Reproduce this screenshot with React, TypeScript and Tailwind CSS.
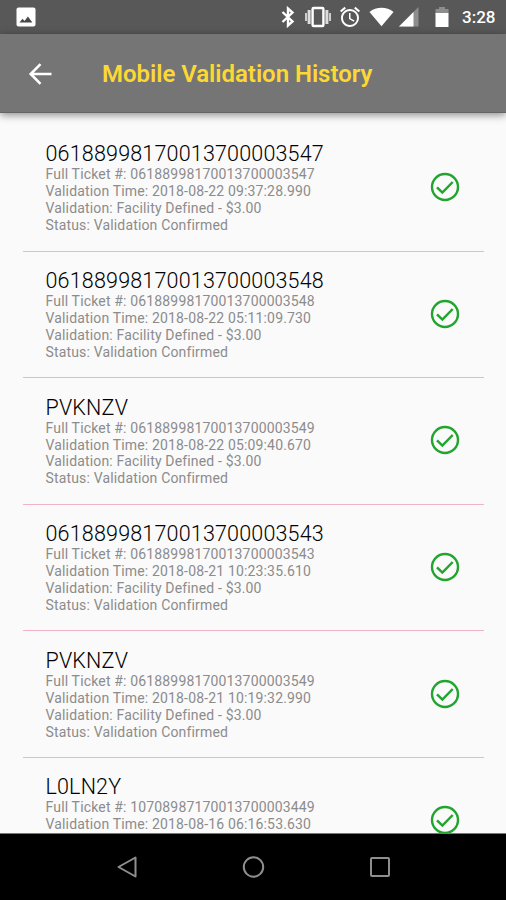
import React from "react";
import { MdAlarm } from "react-icons/md";

const historyData = [
  { title: "06188998170013700003547", ticket: "06188998170013700003547", time: "2018-08-22 09:37:28.990" },
  { title: "06188998170013700003548", ticket: "06188998170013700003548", time: "2018-08-22 05:11:09.730" },
  { title: "PVKNZV", ticket: "06188998170013700003549", time: "2018-08-22 05:09:40.670" },
  { title: "06188998170013700003543", ticket: "06188998170013700003543", time: "2018-08-21 10:23:35.610" },
  { title: "PVKNZV", ticket: "06188998170013700003549", time: "2018-08-21 10:19:32.990" },
  { title: "L0LN2Y", ticket: "10708987170013700003449", time: "2018-08-16 06:16:53.630" },
];

const StatusBar = () => {
  return (
    <div className="flex h-[34px] shrink-0 items-center bg-[#585858] pl-4 text-white">
      <svg className="h-5 w-5" viewBox="0 0 20 20">
        <rect x="0.5" y="0.5" width="19" height="19" rx="2" fill="#fff" />
        <path d="M3.5 15.5l3-3.7 2 2.2 3.4-4.5 4.5 6z" fill="#484848" />
      </svg>
      <svg className="ml-[245px] h-[22px] w-[14px]" viewBox="0 0 14 22" fill="none" stroke="#fff" strokeWidth="2.4">
        <path d="M1.5 6l10 9.5L7 19.5v-17l4.5 4L1.5 16" />
      </svg>
      <svg className="ml-[10px] h-[22px] w-[26px]" viewBox="0 0 26 22" fill="#fff">
        <rect x="0" y="7" width="2" height="8" opacity="0.7" />
        <rect x="2.6" y="4" width="3" height="14" opacity="0.8" />
        <rect x="7.6" y="2" width="10.8" height="18" rx="1" fill="none" stroke="#fff" strokeWidth="2.4" />
        <rect x="20.4" y="4" width="3" height="14" opacity="0.8" />
        <rect x="24" y="7" width="2" height="8" opacity="0.7" />
      </svg>
      <MdAlarm className="ml-[7px] h-6 w-6" />
      <svg className="ml-[7px] h-5 w-[25px]" viewBox="0 0 26 20">
        <path d="M0.5 4.8C7.8-1 18.2-1 25.5 4.8L13 19.6z" fill="#fff" />
      </svg>
      <svg className="ml-[5px] h-5 w-5" viewBox="0 0 20 20">
        <path d="M0 19.5L19.5 0v19.5z" fill="#8d8d8d" />
        <path d="M0 19.5L14.5 5v14.5z" fill="#fff" />
      </svg>
      <svg className="ml-[16px] h-[22px] w-[14px]" viewBox="0 0 14 22">
        <path d="M4 1h6v2h3.5v5H0.5V3H4z" fill="#8d8d8d" />
        <path d="M0.5 7h13v14H0.5z" fill="#fff" />
      </svg>
      <span className="ml-[13px] pt-[2px] text-[17px] font-medium">3:28</span>
    </div>
  );
};

const Header = () => {
  return (
    <div className="z-10 flex h-[79px] shrink-0 items-center border-b border-[#656565] bg-[#757575] pl-[26px] shadow-[0_2px_8px_rgba(0,0,0,0.45)]">
      <svg className="mt-[1px] h-7 w-7" viewBox="0 0 28 28" fill="none" stroke="#fff" strokeWidth="2.6">
        <path d="M14.5 4.2L4.7 14l9.800 9.800M5 14h20.500" />
      </svg>
      <h1 className="mt-[2px] ml-[48px] text-[24px] font-semibold tracking-[-0.03px] whitespace-nowrap text-[#fdd835]">
        Mobile Validation History
      </h1>
    </div>
  );
};

const CheckIcon = () => {
  return (
    <svg className="mt-[-1px] h-[30px] w-[30px]" viewBox="0 0 30 30" fill="none" stroke="#22a52f">
      <circle cx="15" cy="15" r="13" strokeWidth="2.4" />
      <path d="M7 15.3l5.4 5.3L22.7 10" strokeWidth="2.5" />
    </svg>
  );
};

const App = () => {
  return (
    <div className="flex h-[900px] w-[506px] flex-col overflow-hidden bg-[#fafafa] font-['Roboto',sans-serif]">
      <StatusBar />
      <Header />
      <div className="min-h-0 flex-1 overflow-hidden pt-[12px] pr-[22px] pl-[23px]">
        {historyData.map((item, index) => {
          return (
            <div key={index} className="flex h-[126.6px] flex-col">
              <div className="flex flex-1 items-center justify-between pr-[24px] pl-[22.5px]">
                <div className="text-[14px] leading-[16.9px] tracking-[0.16px] whitespace-nowrap text-[#8c8c8c]">
                  <h2 className="text-[21.5px] leading-[25px] font-light tracking-[0.18px] text-black">
                    {item.title}
                  </h2>
                  <p>Full Ticket #: {item.ticket}</p>
                  <p>Validation Time: {item.time}</p>
                  <p>Validation: Facility Defined - $3.00</p>
                  <p>Status: Validation Confirmed</p>
                </div>
                <CheckIcon />
              </div>
              <hr className="border-t border-[#f0b4c4]" />
            </div>
          );
        })}
      </div>
      <div className="flex h-[67px] shrink-0 items-center justify-between border-t border-[#777] bg-black pr-[114px] pl-[116px] text-[#8f8f8f]">
        <svg className="h-6 w-6" viewBox="0 0 24 24" fill="none" stroke="currentColor" strokeWidth="2">
          <path d="M19.5 2.5v19L2.5 12z" strokeLinejoin="round" />
        </svg>
        <svg className="h-6 w-6" viewBox="0 0 24 24" fill="none" stroke="currentColor" strokeWidth="2">
          <circle cx="11.5" cy="12" r="9.7" />
        </svg>
        <svg className="h-6 w-6" viewBox="0 0 24 24" fill="none" stroke="currentColor" strokeWidth="2">
          <rect x="3" y="3" width="18" height="18" rx="1" />
        </svg>
      </div>
    </div>
  );
};
export default App;
